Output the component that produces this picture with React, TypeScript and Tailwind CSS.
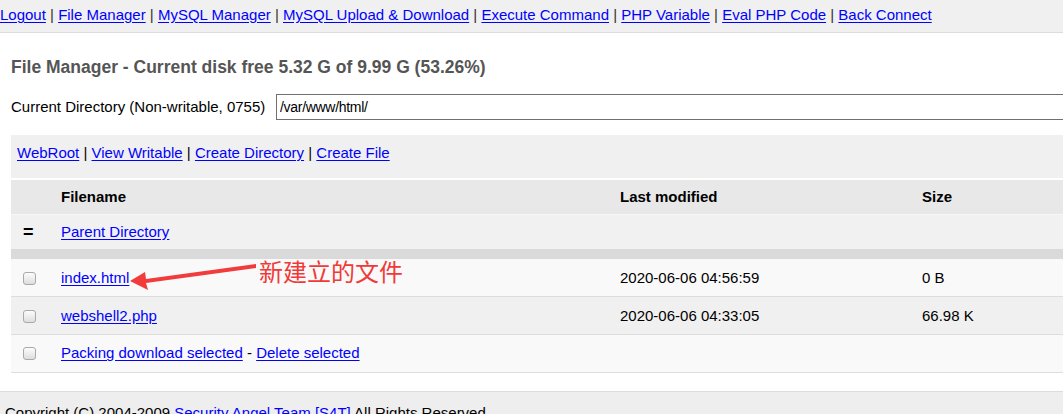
import React from 'react'

const font = { fontFamily: '"Liberation Sans", Arial, sans-serif' }

const navLinks = [
  'Logout',
  'File Manager',
  'MySQL Manager',
  'MySQL Upload & Download',
  'Execute Command',
  'PHP Variable',
  'Eval PHP Code',
  'Back Connect',
]

const Check = () => (
  <span className='block w-[13px] h-[13px] rounded-[3px] border border-[#a9a9a9] bg-gradient-to-b from-[#fcfcfc] to-[#dedede]' />
)

const Link = ({ children }: { children: React.ReactNode }) => (
  <a href='#' className='text-[#0000ff] underline underline-offset-2'>{children}</a>
)

const App = () => {
  return (
    <div className='relative w-[1063px] h-[414px] overflow-hidden bg-white text-[15px] text-black' style={font}>
      <div className='h-[33px] bg-[#f0f0f0] border-b border-[#dcdcdc] pt-[5px] leading-[20px] whitespace-nowrap'>
        {navLinks.map((l, i) => (
          <React.Fragment key={l}>
            {i > 0 && <span className='text-[#333]'>{' | '}</span>}
            <Link>{l}</Link>
          </React.Fragment>
        ))}
      </div>

      <div className='w-[1120px] pl-[11px]'>
        <h2 className='mt-[24px] text-[17.5px] font-bold text-[#555] leading-[20px]'>
          File Manager - Current disk free 5.32 G of 9.99 G (53.26%)
        </h2>

        <div className='mt-[17px] flex items-center h-[26px]'>
          <span className='w-[265px]'>Current Directory (Non-writable, 0755)</span>
          <input
            readOnly
            value='/var/www/html/'
            className='h-[26px] flex-1 border border-[#707070] px-[3px] text-[14px] tracking-[-0.3px] outline-none'
            style={font}
          />
        </div>

        <div className='mt-[15px] h-[43px] bg-[#f0f0f0] pl-[6px] pt-[7px] whitespace-nowrap'>
          <Link>WebRoot</Link> | <Link>View Writable</Link> | <Link>Create Directory</Link> | <Link>Create File</Link>
        </div>

        <div className='mt-[2px]'>
          <div className='h-[34px] bg-[#e8e8e8] flex items-center font-bold'>
            <span className='w-[50px]' />
            <span className='w-[559px]'>Filename</span>
            <span className='w-[302px]'>Last modified</span>
            <span>Size</span>
          </div>
          <div className='h-px bg-[#f8f8f8]' />
          <div className='h-[34px] bg-[#f1f1f1] flex items-center'>
            <span className='w-[50px] pl-[12px] font-bold text-[18px] leading-none'>=</span>
            <Link>Parent Directory</Link>
          </div>
          <div className='h-[10px] bg-[#dadada]' />
          <div className='h-[38px] bg-[#f9f9f9] flex items-center pt-px border-b border-[#dddddd]'>
            <span className='w-[50px] pl-[12px]'><Check /></span>
            <span className='w-[559px]'><Link>index.html</Link></span>
            <span className='w-[302px]'>2020-06-06 04:56:59</span>
            <span>0 B</span>
          </div>
          <div className='h-[38px] bg-[#f0f0f0] flex items-center pt-px border-b border-[#dddddd]'>
            <span className='w-[50px] pl-[12px]'><Check /></span>
            <span className='w-[559px]'><Link>webshell2.php</Link></span>
            <span className='w-[302px]'>2020-06-06 04:33:05</span>
            <span>66.98 K</span>
          </div>
          <div className='h-[38px] bg-[#f9f9f9] flex items-center border-b border-[#dddddd]'>
            <span className='w-[50px] pl-[12px]'><Check /></span>
            <span><Link>Packing download selected</Link> - <Link>Delete selected</Link></span>
          </div>
        </div>
      </div>

      <div className='mt-[18px] border-t border-[#dcdcdc] bg-[#eeeeee] h-[40px] pl-[5px] pt-[10px] whitespace-nowrap'>
        Copyright (C) 2004-2009 <Link>Security Angel Team [S4T]</Link> All Rights Reserved.
      </div>

      <svg className='absolute left-0 top-0 pointer-events-none' width='1063' height='414'>
        <polygon points='256,264 256,268 146,283 148,290 130,281 145,272 146,279' fill='#f23b3b' />
      </svg>
      <div
        className='absolute left-[259px] top-[256px] text-[24px] leading-[30px] text-[#f03a3a]'
        style={{ fontFamily: '"Noto Sans CJK SC", sans-serif' }}
      >
        新建立的文件
      </div>
    </div>
  )
}

export default App
